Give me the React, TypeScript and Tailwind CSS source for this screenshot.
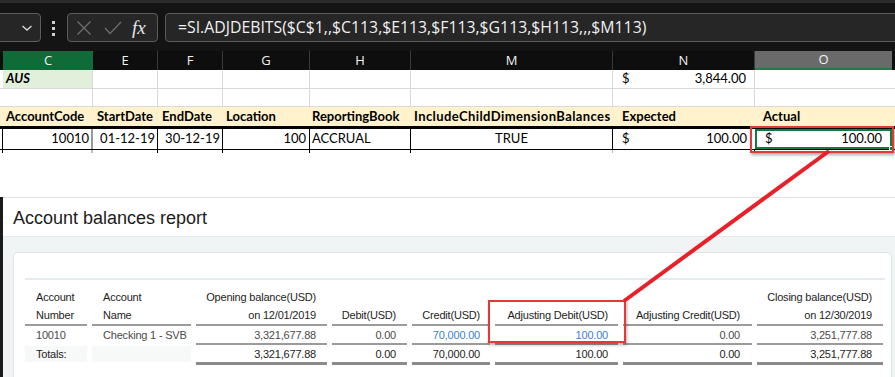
import React from 'react';

const cols = [3, 90, 65, 65, 87, 101, 202, 142, 137, 3];
const letters = ['', 'C', 'E', 'F', 'G', 'H', 'M', 'N', 'O', ''];

function TopBar() {
  return (
    <div className="h-[51px] bg-[#141414] border-t-[3px] border-[#2b2b2b] relative">
      {/* name box */}
      <div className="absolute left-[-10px] top-[10px] w-[51px] h-[29px] rounded-[4px] border border-[#5c5c5c] bg-[#262626] flex items-center justify-end pr-[7px]">
        <svg width="12" height="8" viewBox="0 0 12 8" fill="none" stroke="#d8d8d8" strokeWidth="1.4">
          <path d="M1.5 2l4.5 4 4.5-4" />
        </svg>
      </div>
      <div className="absolute left-[52px] top-[18px] flex flex-col gap-[3px]">
        <span className="w-[3px] h-[3px] bg-[#d0d0d0]" />
        <span className="w-[3px] h-[3px] bg-[#d0d0d0]" />
        <span className="w-[3px] h-[3px] bg-[#d0d0d0]" />
      </div>
      {/* fx box */}
      <div className="absolute left-[67px] top-[10px] w-[91px] h-[29px] rounded-[4px] border border-[#5c5c5c] bg-[#262626] flex items-center">
        <svg className="ml-[8px]" width="16" height="16" viewBox="0 0 16 16" fill="none" stroke="#6e6e6e" strokeWidth="1.3">
          <path d="M1.5 1.5l13 13M14.5 1.5l-13 13" />
        </svg>
        <svg className="ml-[12px]" width="18" height="14" viewBox="0 0 18 14" fill="none" stroke="#6e6e6e" strokeWidth="1.3">
          <path d="M1 7l5 5.5L17 1" />
        </svg>
        <span
          className="ml-[10px] text-[19px] italic text-[#e6e6e6] leading-none"
          style={{ fontFamily: '"Liberation Serif", serif' }}
        >
          fx
        </span>
      </div>
      {/* formula input */}
      <div className="absolute left-[165px] top-[10px] right-[-10px] h-[29px] rounded-[4px] border border-[#5c5c5c] bg-[#262626] flex items-center pl-[12px]">
        <span className="text-[15.8px] text-[#f0f0f0]" style={{ fontFamily: '"Open Sans", sans-serif' }}>
          =SI.ADJDEBITS($C$1,,$C113,$E113,$F113,$G113,$H113,,,$M113)
        </span>
      </div>
    </div>
  );
}

function ColHeaders() {
  return (
    <div className="flex h-[19px] bg-[#0e0e0e]" style={{ fontFamily: '"Open Sans", sans-serif' }}>
      {cols.map((w, i) => {
        const l = letters[i];
        let cls = 'border-r border-[#3a3a3a] text-[#f2f2f2]';
        if (l === 'C') cls = 'bg-[#0f6b38] text-[#f2f2f2]';
        if (l === 'O') cls = 'bg-[#6a6a6a] text-[#f2f2f2] border-b-2 border-[#1e7d45]';
        if (l === '') cls = '';
        return (
          <div key={i} className={`flex items-center justify-center text-[13px] ${cls}`} style={{ width: w }}>
            {l}
          </div>
        );
      })}
    </div>
  );
}

const cellFont = { fontFamily: 'Lato, "Open Sans", sans-serif' };

function Sheet() {
  return (
    <div className="bg-white text-[13px] text-black" style={cellFont}>
      {/* row 1 */}
      <div className="flex h-[19px] border-b border-[#d9d9d9]">
        <div className="w-[3px]" />
        <div className="w-[90px] bg-[#e2efda] border-r border-[#d9d9d9] font-bold italic pl-[3px] flex items-center">AUS</div>
        <div className="w-[65px] border-r border-[#d9d9d9]" />
        <div className="w-[65px] border-r border-[#d9d9d9]" />
        <div className="w-[87px] border-r border-[#d9d9d9]" />
        <div className="w-[101px] border-r border-[#d9d9d9]" />
        <div className="w-[202px] border-r border-[#d9d9d9]" />
        <div className="w-[142px] border-r border-[#d9d9d9] flex items-center justify-between pl-[9px] pr-[8px]">
          <span>$</span>
          <span>3,844.00</span>
        </div>
        <div className="w-[137px]" />
      </div>
      {/* row 2 */}
      <div className="flex h-[18px] border-b border-[#d9d9d9]">
        <div className="w-[3px]" />
        <div className="w-[90px] border-r border-[#d9d9d9]" />
        <div className="w-[65px] border-r border-[#d9d9d9]" />
        <div className="w-[65px] border-r border-[#d9d9d9]" />
        <div className="w-[87px] border-r border-[#d9d9d9]" />
        <div className="w-[101px] border-r border-[#d9d9d9]" />
        <div className="w-[202px] border-r border-[#d9d9d9]" />
        <div className="w-[142px] border-r border-[#d9d9d9]" />
        <div className="w-[137px]" />
      </div>
      {/* row 3 header */}
      <div className="flex h-[19px] bg-[#fff2cc] font-bold items-center">
        <div className="w-[3px]" />
        <div className="w-[90px] pl-[3px]">AccountCode</div>
        <div className="w-[65px] pl-[4px]">StartDate</div>
        <div className="w-[65px] pl-[4px]">EndDate</div>
        <div className="w-[87px] pl-[3px]">Location</div>
        <div className="w-[101px] pl-[2px]">ReportingBook</div>
        <div className="w-[202px] pl-[3px] tracking-[0.4px]">IncludeChildDimensionBalances</div>
        <div className="w-[142px] pl-[9px]">Expected</div>
        <div className="w-[137px] pl-[8px]">Actual</div>
      </div>
      {/* row 4 data */}
      <div className="flex h-[24px] border-t-[3px] border-b border-black">
        <div className="w-[3px] border-r border-black" />
        <div className="w-[90px] border-r-2 border-[#9a9a9a] flex items-center justify-end pr-[2px]">10010</div>
        <div className="w-[65px] border-r border-black flex items-center justify-end pr-[2px]">01-12-19</div>
        <div className="w-[65px] border-r border-black flex items-center justify-end pr-[2px]">30-12-19</div>
        <div className="w-[87px] border-r border-black flex items-center justify-end pr-[3px]">100</div>
        <div className="w-[101px] border-r border-black flex items-center pl-[2px]">ACCRUAL</div>
        <div className="w-[202px] border-r border-black flex items-center justify-center">TRUE</div>
        <div className="w-[142px] flex items-center justify-between pl-[9px] pr-[8px]">
          <span>$</span>
          <span>100.00</span>
        </div>
        <div className="w-[137px] border-2 border-[#107c41] flex items-center justify-between pl-[8px] pr-[8px] relative">
          <span>$</span>
          <span>100.00</span>
          <span className="absolute right-[-4px] bottom-[-4px] w-[5px] h-[5px] bg-[#107c41] border border-white" />
        </div>
      </div>
      {/* partial next row */}
      <div className="flex h-[3px]">
        <div className="w-[3px] border-r border-black" />
        <div className="w-[90px] border-r-2 border-[#bdbdbd]" />
        <div className="w-[65px] border-r border-black" />
        <div className="w-[65px] border-r border-black" />
        <div className="w-[87px] border-r border-black" />
        <div className="w-[101px] border-r border-black" />
        <div className="w-[202px] border-r border-[#bdbdbd]" />
        <div className="w-[142px] border-r border-black" />
        <div className="w-[137px]" />
      </div>
    </div>
  );
}

const rptCols = 'grid grid-cols-[62px_99px_131px_75px_78px_123px_129px_126px] gap-x-[5px]';

function Report() {
  return (
    <div className="flex" style={{ fontFamily: '"Liberation Sans", Arial, sans-serif' }}>
      <div className="w-[3px] shrink-0 bg-[#1a1a1a]" />
      <div className="flex-1 min-w-0 border-t border-[#dde3e6]">
        <div className="h-[39px] bg-white flex items-center pl-[10px] pt-[2px] border-b border-[#e4e9eb]">
          <h1 className="text-[18px] text-[#1c1c1c]">Account balances report</h1>
        </div>
        <div className="bg-[#f1f4f5] pt-[15px] pl-[10px] pr-[3px] h-[200px]">
          <div className="bg-white border border-[#dfe3e6] rounded-[5px] h-[200px] pt-[25px] pl-[11px] pr-[6px]">
            <div className="border-t-2 border-[#e6eaec]" />
            <div className="text-[11px] tracking-[-0.2px] text-[#1e1e1e] pt-[8px]">
              {/* header */}
              <div className={rptCols}>
                <div className="pl-[11px] border-b-2 border-[#9b9b9b] leading-[18px]">
                  <div>Account</div>
                  <div>Number</div>
                </div>
                <div className="pl-[11px] border-b-2 border-[#9b9b9b] leading-[18px]">
                  <div>Account</div>
                  <div>Name</div>
                </div>
                <div className="pr-[11px] border-b-2 border-[#9b9b9b] leading-[18px] text-right">
                  <div>Opening balance(USD)</div>
                  <div>on 12/01/2019</div>
                </div>
                <div className="pr-[11px] border-b-2 border-[#9b9b9b] leading-[18px] text-right flex items-end justify-end">
                  Debit(USD)
                </div>
                <div className="pr-[10px] border-b-2 border-[#9b9b9b] leading-[18px] text-right flex items-end justify-end">
                  Credit(USD)
                </div>
                <div className="pr-[10px] border-b-2 border-[#9b9b9b] leading-[18px] text-right flex items-end justify-end">
                  Adjusting Debit(USD)
                </div>
                <div className="pr-[12px] border-b-2 border-[#9b9b9b] leading-[18px] text-right flex items-end justify-end">
                  Adjusting Credit(USD)
                </div>
                <div className="pr-[11px] border-b-2 border-[#9b9b9b] leading-[18px] text-right">
                  <div>Closing balance(USD)</div>
                  <div>on 12/30/2019</div>
                </div>
              </div>
              {/* data row */}
              <div className={`${rptCols} leading-[16px] pt-[1px]`}>
                <div className="pl-[11px] border-b-2 border-white text-[#4a4a4a]">10010</div>
                <div className="pl-[11px] border-b-2 border-white text-[#4a4a4a]">Checking 1 - SVB</div>
                <div className="pr-[11px] text-right border-b-2 border-[#9b9b9b] text-[#4a4a4a]">3,321,677.88</div>
                <div className="pr-[11px] text-right border-b-2 border-[#9b9b9b] text-[#4a4a4a]">0.00</div>
                <div className="pr-[10px] text-right border-b-2 border-[#9b9b9b] text-[#3a7fc8]">70,000.00</div>
                <div className="pr-[10px] text-right border-b-2 border-[#9b9b9b] text-[#3a7fc8]">100.00</div>
                <div className="pr-[12px] text-right border-b-2 border-[#9b9b9b] text-[#4a4a4a]">0.00</div>
                <div className="pr-[11px] text-right border-b-2 border-[#9b9b9b] text-[#4a4a4a]">3,251,777.88</div>
              </div>
              {/* totals */}
              <div className={`${rptCols} text-[#222] leading-[16px] pt-[1px]`}>
                <div className="pl-[11px] bg-[#f7f8f8] border-b-[3px] border-white">Totals:</div>
                <div className="bg-[#f7f8f8] border-b-[3px] border-white" />
                <div className="pr-[11px] text-right border-b-[3px] border-[#8a8a8a]">3,321,677.88</div>
                <div className="pr-[11px] text-right border-b-[3px] border-[#8a8a8a]">0.00</div>
                <div className="pr-[10px] text-right border-b-[3px] border-[#8a8a8a]">70,000.00</div>
                <div className="pr-[10px] text-right border-b-[3px] border-[#8a8a8a]">100.00</div>
                <div className="pr-[12px] text-right border-b-[3px] border-[#8a8a8a]">0.00</div>
                <div className="pr-[11px] text-right border-b-[3px] border-[#8a8a8a]">3,251,777.88</div>
              </div>
            </div>
          </div>
        </div>
      </div>
    </div>
  );
}

export default function App() {
  return (
    <div className="w-[895px] h-[377px] overflow-hidden relative bg-white">
      <TopBar />
      <ColHeaders />
      <Sheet />
      <div className="h-[44px] bg-white" />
      <Report />
      {/* annotations */}
      <div className="absolute left-[750px] top-[126px] w-[144px] h-[27px] border-2 border-[#e53935] shadow-[1px_2px_3px_rgba(0,0,0,0.35)]" />
      <div className="absolute left-[488px] top-[300px] w-[138px] h-[43px] border-2 border-[#e53935] shadow-[1px_2px_3px_rgba(0,0,0,0.3)]" />
      <svg className="absolute left-0 top-0 pointer-events-none" width="895" height="377">
        <line x1="829" y1="151" x2="624" y2="301" stroke="#e8202a" strokeWidth="4" />
      </svg>
    </div>
  );
}
